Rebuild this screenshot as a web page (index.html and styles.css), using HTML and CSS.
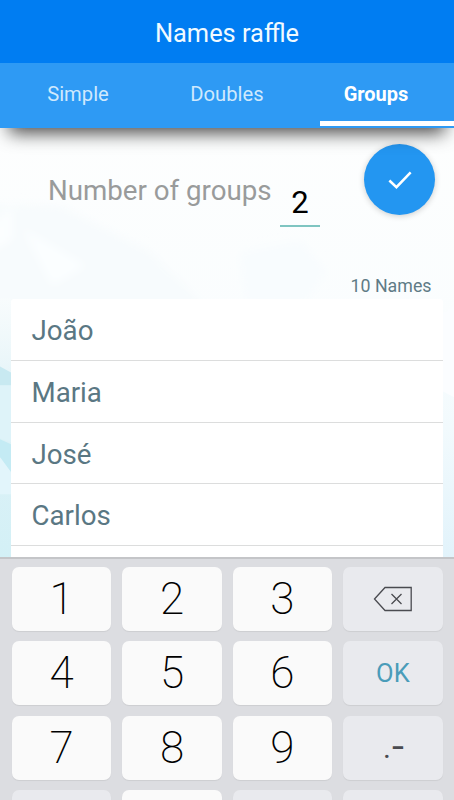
FILE: index.html
```html
<!DOCTYPE html>
<html lang="en">
<head>
<meta charset="utf-8">
<title>Names raffle</title>
<link rel="stylesheet" href="styles.css">
</head>
<body>
<div class="app">
  <header class="title-bar"><h1>Names raffle</h1></header>
  <nav class="tabs">
    <span class="tab">Simple</span>
    <span class="tab">Doubles</span>
    <span class="tab tab-active">Groups</span>
  </nav>
  <main class="content">
    <svg class="backdrop" viewBox="0 0 454 430" preserveAspectRatio="none" aria-hidden="true">
      <defs>
        <linearGradient id="left" x1="0" y1="0" x2="0" y2="1">
          <stop offset="0" stop-color="#f8fcfd"/><stop offset=".22" stop-color="#ecf7fa"/><stop offset=".4" stop-color="#dff2f7"/><stop offset="1" stop-color="#d3f0f6"/>
        </linearGradient>
        <linearGradient id="right" x1="0" y1="0" x2="0" y2="1">
          <stop offset="0" stop-color="#fdfefe"/><stop offset=".45" stop-color="#fafdfe"/><stop offset=".7" stop-color="#f2fafd"/><stop offset="1" stop-color="#e2f3fb"/>
        </linearGradient>
        <filter id="soft" x="-10%" y="-10%" width="120%" height="120%"><feGaussianBlur stdDeviation="5"/></filter>
      </defs>
      <rect width="454" height="430" fill="url(#right)"/>
      <g filter="url(#soft)">
        <path d="M-20 76l80 2 90 46 60 60H-20z" fill="#f7fbfd"/>
        <path d="M22 100l64 38-34 20z" fill="#fbfeff"/>
        <path d="M-10 100l22-22v34l-22 12z" fill="#fcfeff"/>
        <path d="M240 125l60-12 26 30-20 32h-60z" fill="#f8fcfe"/>
      </g>
      <rect y="171" width="11" height="260" fill="url(#left)"/>
      <path d="M0 239l11 6v13H0z" fill="#c8e9f1"/>
      <path d="M0 258h11v57l-11-4z" fill="#def3f9"/>
      <path d="M0 312l11 5v28l-11-15z" fill="#c4ebf4"/>
      <path d="M0 330l11 15v22H0z" fill="#e2f5fb"/>
      <path d="M443 186l11-8v92l-11-6z" fill="#fbfdff"/>
    </svg>
    <div class="setup">
      <label class="setup-label">Number of groups</label>
      <span class="setup-value">2</span>
      <span class="confirm">
        <svg viewBox="0 0 70 70" aria-hidden="true"><path d="M25 36l7 6.500L46 28" fill="none" stroke="#fff" stroke-width="2.500"/></svg>
      </span>
    </div>
    <p class="count">10 Names</p>
    <ul class="names">
      <li>João</li>
      <li>Maria</li>
      <li>José</li>
      <li>Carlos</li>
      <li></li>
    </ul>
  </main>
  <section class="keypad">
    <span class="key">1</span><span class="key">2</span><span class="key">3</span>
    <span class="key key-side">
      <svg class="erase" viewBox="0 0 40 26" aria-hidden="true"><path d="M1.500 13L12 1.500h26.200v23H12zM18.500 8l10 10M28.500 8l-10 10" fill="none" stroke="#4a4b50" stroke-width="1.300"/></svg>
    </span>
    <span class="key">4</span><span class="key">5</span><span class="key">6</span>
    <span class="key key-side key-ok">OK</span>
    <span class="key">7</span><span class="key">8</span><span class="key">9</span>
    <span class="key key-side key-punct"><span>.</span><span class="dash">-</span></span>
    <span class="key key-side"></span><span class="key"></span><span class="key key-side"></span><span class="key key-side"></span>
  </section>
</div>
</body>
</html>
```
FILE: styles.css
```css
* { box-sizing: border-box; }
body { margin: 0; font-family: Roboto, "Liberation Sans", sans-serif; }
.app { width: 454px; height: 800px; overflow: hidden; display: flex; flex-direction: column; background: #fff; }
.title-bar { height: 63px; flex: none; background: #007df2; display: flex; align-items: center; justify-content: center; padding-top: 3px; }
h1 { margin: 0; color: #f0faff; font-size: 25.400px; font-weight: 400; line-height: 30px; }
.tabs { position: relative; z-index: 2; height: 65px; flex: none; background: #2e9af4; display: grid; grid-template-columns: repeat(3, 149px); justify-content: center; box-shadow: 0 14px 18px -9px rgba(0,0,0,.72); }
.tab { color: #cfe9fd; font-size: 20.200px; line-height: 62px; text-align: center; }
.tab-active { color: #fff; font-size: 20px; font-weight: 700; }
.tab-active::after { content: ""; position: absolute; right: 0; top: 58px; width: 134.500px; height: 5px; background: #fff; }
.content { position: relative; height: 429px; flex: none; overflow: hidden; }
.backdrop { position: absolute; inset: 0; width: 100%; height: 100%; }
.setup { position: relative; height: 147px; display: flex; align-items: flex-start; padding-left: 48px; }
.setup-label { width: 232px; padding-top: 46px; color: #999b9b; font-size: 27.700px; line-height: 34px; white-space: nowrap; }
.setup-value { width: 40px; height: 40px; margin-top: 59px; border-bottom: 2px solid #7fc5c1; color: #000; font-size: 31px; line-height: 32px; text-align: center; }
.confirm { width: 71px; height: 71px; margin: 15.500px 0 0 44.300px; border-radius: 50%; background: #2396f1; box-shadow: 0 1px 6px rgba(0,0,0,.2); }
.confirm svg { display: block; }
.count { position: relative; margin: 0; height: 24px; padding-right: 22.500px; text-align: right; color: #5f7b86; font-size: 17.800px; line-height: 21px; }
.names { position: relative; margin: 0 11px; padding: 0; list-style: none; background: #fff; border-radius: 3px 3px 0 0; }
.names li { height: 61.750px; padding-left: 20.500px; border-bottom: 1px solid #dcdddd; color: #5a7783; font-size: 27.700px; line-height: 63px; }
.keypad { flex: 1; min-height: 0; border-top: 2px solid #c4c5c8; background: #dcdde1; display: grid; grid-template-columns: repeat(4, 99.400px); grid-auto-rows: 64px; gap: 10.400px 11px; padding: 8px 0 0 12px; }
.key { display: flex; align-items: center; justify-content: center; background: #fafafa; border-radius: 7px; box-shadow: 0 1px 1px rgba(0,0,0,.07); color: #000; font-size: 44px; font-weight: 200; line-height: 64px; }
.key-side { background: #e9eaee; }
.erase { width: 40px; height: 26px; }
.key-ok { color: #4a9cb9; font-size: 25.500px; font-weight: 400; }
.key-punct { color: #4a4b50; font-size: 30px; font-weight: 400; gap: 2px; }
.dash { font-size: 36px; line-height: 1; transform: translateY(-1px) scaleX(1.200); }
```
